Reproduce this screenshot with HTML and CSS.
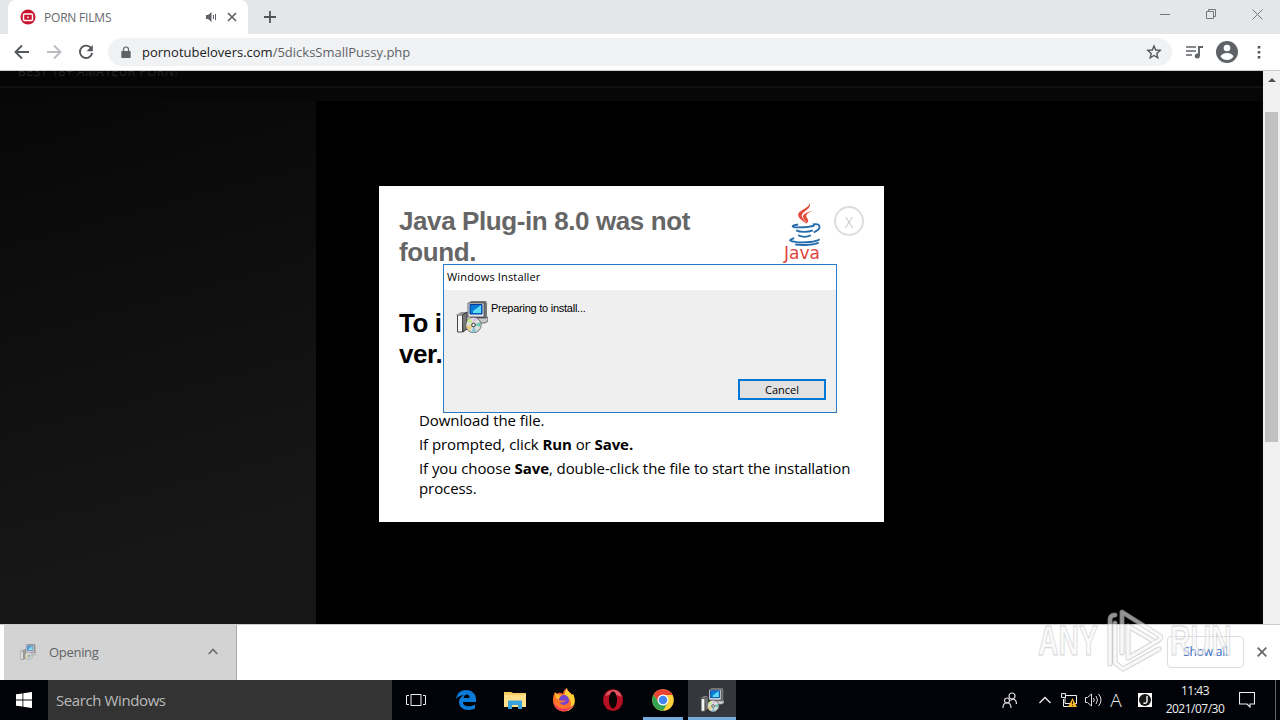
FILE: index.html
```html
<!DOCTYPE html>
<html lang="en">
<head>
    <meta charset="UTF-8">
    <title>Windows Installer</title>
    <link rel="stylesheet" href="styles.css">
</head>
<body>
    <svg width="0" height="0" class="sprites">
        <symbol id="msi" viewBox="0 0 32 32">
            <path d="M13 2l2-2h15l1 2v14l-3 3H15z" fill="#777"/>
            <path d="M12 2h16v14H12z" fill="#e4e4ef" stroke="#333" stroke-width=".7"/>
            <path d="M14 3.500h12v9.500H14z" fill="#087bd8" stroke="#003b95"/>
            <path d="M17 10l8-6v8h-8z" fill="#5adcf5"/>
            <path d="M16 17h14l2-1v4l-3 2H16z" fill="#c9c9cd" stroke="#333" stroke-width=".7"/>
            <path d="M0 14l5-3h6v2H0z" fill="#999"/>
            <path d="M6 14l5-3v17l-4 3z" fill="#777" stroke="#222" stroke-width=".8"/>
            <path d="M1.500 14h5v17h-5z" fill="#f5f5f5" stroke="#444"/>
            <circle cx="17.500" cy="24" r="7.700" fill="#dededc" stroke="#555" stroke-width=".8"/>
            <path d="M17.500 24L11 20l3-3z" fill="#c4eb89"/>
            <path d="M17.500 24L17 16.500l4 1z" fill="#d8c2e8"/>
            <path d="M17.500 24l7-3v5z" fill="#72c8b4"/>
            <path d="M17.500 24l3 7-5 .4z" fill="#8cc6d7"/>
            <path d="M17.500 24L10 25l3 5z" fill="#e6cf80"/>
            <circle cx="17.500" cy="24" r="1.800" fill="#fff" stroke="#333"/>
        </symbol>
    </svg>

    <div class="screen">
        <div class="tabs">
            <div class="tab">
                <svg width="16" height="16" viewBox="0 0 16 16"><circle cx="8" cy="8" r="7.500" fill="#c8142d"/><rect x="3.500" y="5" width="9" height="6.500" rx="1" fill="none" stroke="#fff" stroke-width="1.500"/><path d="M7.300 7v2.500L9.300 8.200z" fill="#fff"/></svg>
                <span class="tab-title">PORN FILMS</span>
                <svg width="12" height="12" viewBox="0 0 12 12"><path d="M1 4h2l3.500-3v10L3 8H1z" fill="#5f6368"/><path d="M8.500 4v4M10.500 3v6" stroke="#5f6368" fill="none"/></svg>
                <svg class="tab-close" width="10" height="10" viewBox="0 0 10 10"><path d="M1 1l8 8M9 1L1 9" stroke="#5f6368" stroke-width="1.700"/></svg>
            </div>
            <svg class="new-tab" width="12" height="12" viewBox="0 0 12 12"><path d="M6 0v12M0 6h12" stroke="#505357" stroke-width="1.800"/></svg>
            <div class="window-buttons">
                <svg width="10" height="10" viewBox="0 0 10 10"><path d="M0 5.500h10" stroke="#777"/></svg>
                <svg width="10" height="10" viewBox="0 0 10 10"><path d="M.5 2.500h7v7h-7zM2.500 2V.5h7v7H8" fill="none" stroke="#777"/></svg>
                <svg width="11" height="11" viewBox="0 0 11 11"><path d="M.5.500l10 10M10.500.500l-10 10" stroke="#777"/></svg>
            </div>
        </div>

        <div class="toolbar">
            <svg width="16" height="16" viewBox="0 0 16 16"><path d="M15 8H2M8 1.500L1.500 8 8 14.500" fill="none" stroke="#54575b" stroke-width="1.900"/></svg>
            <svg width="16" height="16" viewBox="0 0 16 16"><path d="M1 8h13M8 1.500L14.500 8 8 14.500" fill="none" stroke="#bbbdc0" stroke-width="1.900"/></svg>
            <svg width="16" height="16" viewBox="0 0 16 16"><path d="M13.400 4.600A6.200 6.200 0 1 0 14.200 9" fill="none" stroke="#54575b" stroke-width="1.900"/><path d="M14.800 1v6.200H8.600z" fill="#54575b"/></svg>
            <div class="address">
                <svg width="10" height="13" viewBox="0 0 10 13"><path d="M1 5h8q.7 0 .7.700v5.600q0 .7-.7.700H1q-.7 0-.7-.7V5.700Q.3 5 1 5z" fill="#5f6368"/><path d="M2.500 5.500v-2a2.500 2.500 0 0 1 5 0v2" fill="none" stroke="#5f6368" stroke-width="1.200"/></svg>
                <span class="url"><b>pornotubelovers.com</b>/5dicksSmallPussy.php</span>
                <svg width="16" height="16" viewBox="0 0 16 16"><path d="M8 2l1.700 4 4.500.4-3.400 3 1 4.400L8 11.500l-3.800 2.300 1-4.400-3.400-3L6.300 6z" fill="none" stroke="#54575b" stroke-width="1.400"/></svg>
            </div>
            <div class="tools">
                <svg width="17" height="14" viewBox="0 0 17 14"><path d="M0 2h10M0 6h10M0 10h6" stroke="#5f6368" stroke-width="1.700"/><path d="M13 11V2h4" fill="none" stroke="#5f6368" stroke-width="1.900"/><circle cx="11.300" cy="11" r="2.500" fill="#5f6368"/></svg>
                <svg width="22" height="22" viewBox="0 0 22 22"><circle cx="11" cy="11" r="11" fill="#5f6368"/><circle cx="11" cy="7" r="3.300" fill="#fff"/><path d="M4.500 15.500q1.500-3.500 6.500-3.500t6.500 3.500Q15 19 11 19t-6.500-3.500z" fill="#fff"/></svg>
                <svg width="4" height="14" viewBox="0 0 4 14"><path d="M.7 1h2.600v2.500H.7zM.7 6h2.600v2.500H.7zM.7 11h2.600v2.500H.7z" fill="#54575b"/></svg>
            </div>
        </div>

        <div class="page">
            <div class="content">
                <div class="site-head">BEST 18+ AMATEUR PORN!</div>
                <div class="video">
                    <div class="notice">
                        <div class="notice-head">
                            <h1>Java Plug-in 8.0 was not found.</h1>
                            <div class="java">
                                <svg width="40" height="43" viewBox="0 0 40 44">
                                    <path d="M26 0c2 7-10 9-8 14 1 3 4 4 4 7-3-3-8-5-8-9 0-5 11-6 12-12z" fill="#e34b3b"/>
                                    <path d="M29 8c-5 2-8 4-6 7s2 4-1 6c1-3-3-4-3-7 0-3 5-5 10-6z" fill="#e34b3b"/>
                                    <path d="M14 22c-8 1-7 3 0 3 6 0 12 0 17-2M12 28c4 2 12 2 17 0M14 33c4 2 9 2 13 0M29 22c9-2 9 5 1 8M10 36c-6 2-6 3 3 4 8 .7 19 0 23-3M11 42.500c8 1 19 .5 24-2" fill="none" stroke="#276cab" stroke-width="1.900"/>
                                </svg>
                                <span>Java</span>
                            </div>
                            <span class="notice-close">X</span>
                        </div>
                        <h2>To install<br>ver.</h2>
                        <ul>
                            <li>Download the file.</li>
                            <li>If prompted, click <b>Run</b> or <b>Save.</b></li>
                            <li>If you choose <b>Save</b>, double-click the file to start the installation process.</li>
                        </ul>
                    </div>
                </div>
            </div>
            <div class="scrollbar">
                <svg width="8" height="4" viewBox="0 0 8 4"><path d="M0 4l4-4 4 4z" fill="#505050"/></svg>
                <div class="thumb"></div>
            </div>
        </div>

        <div class="downloads">
            <div class="download">
                <svg class="faded" width="16" height="16"><use href="#msi"/></svg>
                <span>Opening</span>
                <svg width="10" height="7" viewBox="0 0 10 7"><path d="M.7 6L5 1.500 9.300 6" fill="none" stroke="#6b6e70" stroke-width="1.700"/></svg>
            </div>
            <button class="show-all">Show all</button>
            <svg class="bar-close" width="10" height="10" viewBox="0 0 10 10"><path d="M.7.700l8.600 8.600M9.300.700L.7 9.300" stroke="#666" stroke-width="1.700"/></svg>
        </div>

        <div class="taskbar">
            <div class="start"><svg width="16" height="16" viewBox="0 0 16 16"><path d="M0 2.300l6.500-.9v6.200H0zM7.300 1.300L16 0v7.600H7.300zM0 8.400h6.500v6.200L0 13.700zM7.300 8.400H16V16l-8.700-1.300z" fill="#fff"/></svg></div>
            <div class="search">Search Windows</div>
            <div class="app task-view"><svg width="20" height="14" viewBox="0 0 20 14"><path d="M5 1.500h10v11H5zM3 2.500H.5v9H3M17 2.500h2.500v9H17" fill="none" stroke="#eee"/></svg></div>
            <div class="app"><svg width="20" height="20" viewBox="0 0 20 20"><path d="M0 9C1 3 5 0 10 0c6 0 10 4 10 9v3H7c0 5 7 5.500 12 2.500v4C11 22 3 19 3 12c0-3 2-5.500 5-7-4 .5-6.500 2-8 4zm7.500-1h6c0-5-5.500-4-6 0z" fill="#0b7bd9"/></svg></div>
            <div class="app"><svg width="22" height="18" viewBox="0 0 22 18"><path d="M0 1h7l2 1h13v14H0z" fill="#f6ce62"/><path d="M0 4h22v12H0z" fill="#ffe08b"/><path d="M4 9.500h14V18h-4v-4H8v4H4z" fill="#39a3dd"/></svg></div>
            <div class="app"><svg width="24" height="24" viewBox="0 0 24 24"><path d="M3 4l2 2c2-2 4-1 6 0 0-3 2-5 4-6 0 3 3 4 5 7l1-1c2 4 2 8 0 12-4 8-16 7-19-1C0 12 1 8 3 4z" fill="#ff6d28"/><path d="M15 0c0 3 3 4 5 7l1-1c4 8 1 15-6 17 6-5 5-12-1-14-2-2-1-6 1-9z" fill="#ffce37"/><path d="M3 5l4 2 4 1c-2 2-4 1-4 4-3-1-4-3-4-7z" fill="#ffb733"/><path d="M1 14c4 8 15 10 21 2-3 9-18 10-21-2z" fill="#ee3468"/><circle cx="12" cy="12" r="5" fill="#7545ce"/><path d="M6 11c2 2 5 2 8 1-2 3-5 3-8 2 1 3 6 5 10 2-2 5-12 4-12-3z" fill="#ff7a2f"/></svg></div>
            <div class="app"><svg width="22" height="22" viewBox="0 0 22 22"><ellipse cx="11" cy="11" rx="10" ry="10.800" fill="#b60f21"/><path d="M3 7Q6 0 13 1q5 1 7 7Q12 4 3 7z" fill="#df5660"/><ellipse cx="11" cy="11" rx="4" ry="8.500" fill="#080203"/></svg></div>
            <div class="app running"><svg width="22" height="22" viewBox="0 0 22 22"><circle cx="11" cy="11" r="10.800" fill="#ffd13d"/><path d="M1.600 5.700A10.800 10.800 0 0 1 20.500 6H11L6.700 13.500z" fill="#e94335"/><path d="M1.600 5.700A10.800 10.800 0 0 0 11 21.800l4.600-8L11 16l-4.300-2.500z" fill="#32a350"/><circle cx="11" cy="11" r="5.500" fill="#fff"/><circle cx="11" cy="11" r="4.300" fill="#4385ee"/></svg></div>
            <div class="app running active"><svg width="24" height="24"><use href="#msi"/></svg></div>
            <div class="tray">
                <div class="people"><svg width="15" height="17" viewBox="0 0 15 17"><g fill="none" stroke="#ddd" stroke-width="1.200"><circle cx="10" cy="4" r="3"/><circle cx="5" cy="8.500" r="2.500"/><path d="M1 16c0-7 8-7 8 0M8.500 8.500c3-3 6-1 6 3.500"/></g></svg></div>
                <div><svg width="12" height="8" viewBox="0 0 12 8"><path d="M.5 7L6 1.500 11.500 7" fill="none" stroke="#eee" stroke-width="1.300"/></svg></div>
                <div><svg width="16" height="15" viewBox="0 0 16 15"><path d="M4 2.500h11.500v8H4zM2.500 6v7.500H9" fill="none" stroke="#eee"/><path d="M.5.500h4v4h-4z" fill="#111" stroke="#eee"/><path d="M11.500 5l4.500 9H7z" fill="#f5b52c"/><path d="M11.500 8v3M11.500 12v1" stroke="#402c00"/></svg></div>
                <div><svg width="17" height="14" viewBox="0 0 17 14"><path d="M.5 4.500h2l4-3.500v12l-4-3.500h-2zM8.500 5q1.500 2 0 4M11 3q3 4 0 8M13.500 1q5 6 0 12" fill="none" stroke="#ddd"/></svg></div>
                <div class="lang">A</div>
                <div class="ime"><svg width="14" height="14" viewBox="0 0 14 14"><path d="M0 0h14v14H0z" fill="#fff"/><circle cx="7" cy="7" r="6" fill="#161616"/><path d="M9 3v5q0 3-3.500 2" fill="none" stroke="#fff" stroke-width="1.400"/></svg></div>
                <div class="clock"><span>11:43</span><span>2021/07/30</span></div>
                <div class="notes"><svg width="16" height="16" viewBox="0 0 16 16"><path d="M.5.500h15v11.500H11v3L8 12H.500z" fill="none" stroke="#eee" stroke-width="1.100"/></svg></div>
                <div class="peek"></div>
            </div>
        </div>

        <div class="installer">
            <div class="installer-title">Windows Installer</div>
            <div class="installer-body">
                <div class="installer-message">
                    <svg width="32" height="32"><use href="#msi"/></svg>
                    <span>Preparing to install...</span>
                </div>
                <button class="cancel">Cancel</button>
            </div>
        </div>

        <div class="watermark">
            <span>ANY</span>
            <svg width="58" height="64" viewBox="0 0 58 64"><g fill="none" stroke-linejoin="round" stroke-linecap="round"><path d="M4 56V12q0-5 5-5M9 15v40l8 6 36-20M16 45V4l38 24q2 2-1 4L22 50V18l24 14" stroke="#aaa" stroke-width="5"/><path d="M4 56V12q0-5 5-5M9 15v40l8 6 36-20M16 45V4l38 24q2 2-1 4L22 50V18l24 14" stroke="#f4f4f4" stroke-width="3.500"/></g></svg>
            <span>RUN</span>
        </div>
    </div>
</body>
</html>
```
FILE: styles.css
```css
* {
    box-sizing: border-box;
}
body {
    margin: 0;
    font-family: "Open Sans", "Noto Sans", sans-serif;
}
svg {
    display: block;
    flex-shrink: 0;
}
.sprites {
    position: absolute;
}
button {
    font-family: inherit;
    padding: 0;
}
.screen {
    position: relative;
    width: 1280px;
    height: 720px;
    display: flex;
    flex-direction: column;
    overflow: hidden;
    background: #fff;
}

/* browser */
.tabs {
    height: 34px;
    display: flex;
    background: #e3e7ea;
    padding-left: 8px;
}
.tab {
    width: 240px;
    display: flex;
    align-items: center;
    padding: 0 11px 0 12px;
    background: #fff;
    border-radius: 8px 8px 0 0;
}
.tab-title {
    flex: 1;
    margin-left: 8px;
    font-size: 12px;
    letter-spacing: -0.2px;
    color: #66696d;
}
.tab-close {
    margin-left: 10px;
}
.new-tab {
    margin: 11px 0 0 16px;
}
.window-buttons {
    margin-left: auto;
    display: flex;
    gap: 36px;
    padding: 9px 17px 0 0;
}
.toolbar {
    height: 37px;
    display: flex;
    align-items: center;
    gap: 16px;
    padding: 0 20px 0 14px;
    border-bottom: 1px solid #ccc;
}
.address {
    width: 1064px;
    height: 28px;
    margin-left: -2px;
    margin-right: -2px;
    padding: 0 10px 0 13px;
    display: flex;
    flex-shrink: 0;
    align-items: center;
    border-radius: 14px;
    background: #f0f2f4;
}
.url {
    flex: 1;
    margin-left: 11px;
    font-size: 13px;
    color: #5f6368;
}
.url b {
    font-weight: normal;
    color: #202124;
}
.tools {
    display: flex;
    align-items: center;
    gap: 13px;
}
.tools svg:last-child {
    margin-left: 6px;
}

/* page */
.page {
    height: 553px;
    display: flex;
}
.content {
    width: 1263px;
    padding-left: 316px;
    background: linear-gradient(165deg, #060606, #171717 60%);
}
.site-head {
    height: 30px;
    margin-left: -316px;
    padding-left: 18px;
    overflow: hidden;
    font-size: 12px;
    letter-spacing: 0.5px;
    line-height: 1px;
    color: #242424;
    background: linear-gradient(#050505 15px, #111 15px, #111 17px, #070707 17px);
}
.video {
    height: 523px;
    padding: 85px 0 0 63px;
    background: #000;
}
.notice {
    width: 505px;
    height: 336px;
    padding: 20px;
    background: #fff;
}
.notice-head {
    display: flex;
    height: 102px;
}
h1, h2 {
    margin: 0;
    font-family: "Liberation Sans", Arial, sans-serif;
    font-size: 26px;
    line-height: 31px;
    letter-spacing: -0.4px;
}
h1 {
    width: 385px;
    padding-right: 80px;
    color: #666;
}
h2 {
    height: 102px;
}
.java {
    width: 40px;
    margin-top: -3px;
}
.java span {
    display: block;
    font-family: "DejaVu Sans", sans-serif;
    font-size: 17px;
    line-height: 15px;
    color: #df443d;
}
.notice-close {
    width: 30px;
    height: 30px;
    margin-left: 10px;
    border: 2px solid #ddd;
    border-radius: 50%;
    text-align: center;
    font-size: 15px;
    font-weight: 300;
    line-height: 29px;
    color: #bbb;
}
ul {
    list-style: none;
    margin: 0;
    padding: 0 0 0 20px;
}
li {
    font-size: 15px;
    line-height: 20px;
    letter-spacing: -0.08px;
    margin-bottom: 4px;
}
.scrollbar {
    width: 17px;
    display: flex;
    flex-direction: column;
    align-items: center;
    padding-top: 7px;
    background: #f1f1f1;
}
.thumb {
    width: 13px;
    height: 330px;
    margin-top: 30px;
    background: #c1c1c1;
}

/* downloads bar */
.downloads {
    height: 56px;
    display: flex;
    align-items: center;
    padding: 0 13px 0 4px;
    border-top: 1px solid #ccc;
}
.download {
    width: 233px;
    height: 55px;
    display: flex;
    align-items: center;
    padding: 0 18px 2px 16px;
    border-right: 1px solid #aaa;
    background: #d3d3d3;
}
.download span {
    flex: 1;
    margin-left: 13px;
    font-size: 13px;
    letter-spacing: -0.3px;
    color: #606366;
}
.faded {
    opacity: .6;
}
.show-all {
    width: 77px;
    height: 32px;
    margin: 0 0 2px auto;
    border: 1px solid #dadce0;
    border-radius: 4px;
    background: #fff;
    color: #2b68c4;
    font-size: 12px;
    letter-spacing: -0.2px;
}
.bar-close {
    margin: 0 0 2px 13px;
}

/* taskbar */
.taskbar {
    height: 40px;
    display: flex;
    background: #020308;
    color: #eee;
}
.start, .app, .tray div {
    display: flex;
    align-items: center;
    justify-content: center;
}
.start {
    width: 48px;
}
.search {
    width: 344px;
    padding-left: 8px;
    background: #333;
    color: #bbb;
    font-size: 15px;
    letter-spacing: -0.4px;
    line-height: 40px;
}
.app {
    width: 49px;
    border-bottom: 3px solid transparent;
    padding-top: 3px;
}
.task-view {
    padding-right: 1px;
}
.running {
    width: 40px;
    margin-left: 6px;
    border-color: #76a9dc;
}
.running.active {
    width: 48px;
    margin-left: 5px;
    background: #34383c;
}
.tray {
    margin-left: auto;
    display: flex;
}
.tray div {
    width: 24px;
}
.tray .people {
    width: 48px;
}
.tray .lang {
    font-size: 19px;
    font-weight: 300;
    padding-right: 2px;
}
.tray .ime {
    width: 33px;
    padding-right: 2px;
}
.tray .clock {
    width: 66px;
    flex-direction: column;
    font-size: 12px;
    line-height: 18px;
    letter-spacing: -0.5px;
}
.tray .notes {
    width: 38px;
}
.tray .peek {
    width: 5px;
    margin-left: 9px;
    border-left: 1px solid #666;
}

/* installer window */
.installer {
    position: absolute;
    left: 443px;
    top: 264px;
    width: 394px;
    height: 149px;
    border: 1px solid #287bc0;
    background: #fff;
    font-size: 11px;
}
.installer-title {
    height: 25px;
    padding-left: 3px;
    line-height: 24px;
    letter-spacing: 0.15px;
}
.installer-body {
    height: 122px;
    padding: 11px 10px 12px 12px;
    display: flex;
    flex-direction: column;
    justify-content: space-between;
    background: #efefef;
}
.installer-message {
    display: flex;
    gap: 3px;
    line-height: 14px;
    letter-spacing: -0.25px;
    font-family: "Liberation Sans", Arial, sans-serif;
}
.cancel {
    align-self: flex-end;
    width: 88px;
    height: 21px;
    border: 2px solid #0078d7;
    background: #e1e1e1;
    font-size: 11px;
}

.watermark {
    position: absolute;
    left: 1038px;
    top: 608px;
    display: flex;
    align-items: center;
    gap: 6px;
    opacity: .6;
    color: #f8f8f8;
    font-family: "Liberation Sans", sans-serif;
    font-size: 43px;
    font-weight: bold;
    -webkit-text-stroke: 1px #bbb;
    pointer-events: none;
}
.watermark span {
    width: 62px;
    transform: scaleX(.66);
    transform-origin: left;
}
```
